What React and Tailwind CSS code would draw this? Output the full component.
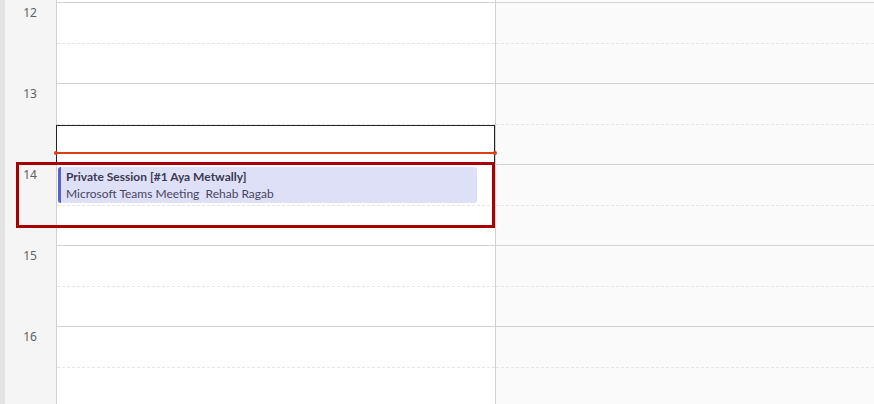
const hours = ["12", "13", "14", "15", "16"];

const HourRow = ({ children, className = "" }) => (
  <div className={`h-[81px] border-t border-[#d1d1d1] flex flex-col ${className}`}>
    <div className="h-[40px]" />
    <div className="border-t border-dashed border-[#e6e6e6]">{children}</div>
  </div>
);

export default function App() {
  return (
    <div
      className="relative w-[874px] h-[404px] overflow-hidden bg-white flex"
      style={{ fontFamily: '"Noto Sans", "Open Sans", sans-serif' }}
    >
      {/* time gutter */}
      <div className="flex w-[57px] shrink-0 border-r border-[#d1d1d1]">
        <div className="w-[5px] bg-[#e3e3e3]" />
        <div className="flex-1 bg-[#f5f5f5] pt-[2px]">
          {hours.map((h) => (
            <div key={h} className="h-[81px] pt-[3px] pr-[1px] text-center text-[12px] leading-[16px] text-[#616161]">
              {h}
            </div>
          ))}
        </div>
      </div>

      {/* day column */}
      <div className="relative w-[439px] shrink-0 border-r border-[#d1d1d1] pt-[2px]">
        {hours.map((h) => (
          <HourRow key={h} />
        ))}
      </div>

      {/* next column */}
      <div className="flex-1 bg-[#fafafa] pt-[2px]">
        {hours.map((h) => (
          <HourRow key={h} />
        ))}
      </div>

      {/* selected slot */}
      <div className="absolute left-[56px] top-[125px] w-[439px] h-[40px] border border-[#242424]" />

      {/* now line */}
      <div className="absolute left-[56px] top-[152px] w-[439px] h-[2px] bg-[#dc3e15]">
        <div className="absolute -left-[2px] -top-[1px] h-[4px] w-[4px] rounded-full bg-[#dc3e15]" />
        <div className="absolute -right-[2px] -top-[1px] h-[4px] w-[4px] rounded-full bg-[#dc3e15]" />
      </div>

      {/* event */}
      <div
        className="absolute left-[58px] top-[167px] w-[419px] h-[36px] rounded-[3px] bg-[#dee0f8] border-l-[3px] border-[#5b5fc7] pl-[5px] pt-[2px]"
        style={{ fontFamily: 'Lato, "Noto Sans", sans-serif' }}
      >
        <div className="text-[12px] leading-[16px] font-bold text-[#3b3a50] whitespace-nowrap">
          Private Session [#1 Aya Metwally]
        </div>
        <div className="text-[12px] leading-[17px] text-[#474660] whitespace-pre">
          Microsoft Teams Meeting  Rehab Ragab
        </div>
      </div>

      {/* annotation */}
      <div className="absolute left-[16px] top-[162px] w-[479px] h-[66px] border-[3px] border-[#a80000]" />
    </div>
  );
}
